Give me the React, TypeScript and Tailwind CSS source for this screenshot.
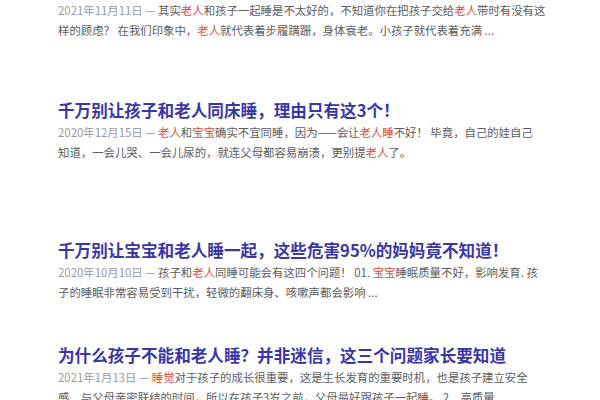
import React from 'react';

type Part = string | { hl: string };

interface ResultProps {
  title?: string;
  date: string;
  lines: Part[][];
  className?: string;
}

const Line: React.FC<{ parts: Part[] }> = ({ parts }) => (
  <>
    {parts.map((p, i) =>
      typeof p === 'string' ? (
        <span key={i}>{p}</span>
      ) : (
        <span key={i} className="text-[#e5473d]">{p.hl}</span>
      )
    )}
  </>
);

const Result: React.FC<ResultProps> = ({ title, date, lines, className }) => (
  <div className={className}>
    {title && (
      <h3 className="text-[16.6px] leading-[24px] font-semibold text-[#3b36a8] whitespace-nowrap">
        {title}
      </h3>
    )}
    <div className="text-[11.4px] leading-[20px] text-[#5c5c5c] whitespace-nowrap">
      {lines.map((parts, i) => (
        <div key={i}>
          {i === 0 && <span className="text-[#9a9a9a]">{date} — </span>}
          <Line parts={parts} />
        </div>
      ))}
    </div>
  </div>
);

export default function App() {
  return (
    <div
      className="w-[600px] h-[400px] overflow-hidden bg-white pl-[58px]"
      style={{ fontFamily: '"Noto Sans CJK SC", "Noto Sans", sans-serif' }}
    >
      <Result
        date="2021年11月11日"
        lines={[
          ['其实', { hl: '老人' }, '和孩子一起睡是不太好的，不知道你在把孩子交给', { hl: '老人' }, '带时有没有这'],
          ['样的顾虑？ 在我们印象中，', { hl: '老人' }, '就代表着步履蹒跚，身体衰老。小孩子就代表着充满 ...'],
        ]}
      />
      <Result
        className="mt-[58px]"
        title="千万别让孩子和老人同床睡，理由只有这3个！"
        date="2020年12月15日"
        lines={[
          [{ hl: '老人' }, '和', { hl: '宝宝' }, '确实不宜同睡，因为——会让', { hl: '老人睡' }, '不好！ 毕竟，自己的娃自己'],
          ['知道，一会儿哭、一会儿尿的，就连父母都容易崩溃，更别提', { hl: '老人' }, '了。'],
        ]}
      />
      <Result
        className="mt-[76px]"
        title="千万别让宝宝和老人睡一起，这些危害95%的妈妈竟不知道！"
        date="2020年10月10日"
        lines={[
          ['孩子和', { hl: '老人' }, '同睡可能会有这四个问题！ 01. ', { hl: '宝宝' }, '睡眠质量不好，影响发育. 孩'],
          ['子的睡眠非常容易受到干扰，轻微的翻床身、咳嗽声都会影响 ...'],
        ]}
      />
      <Result
        className="mt-[41px]"
        title="为什么孩子不能和老人睡？并非迷信，这三个问题家长要知道"
        date="2021年1月13日"
        lines={[
          [{ hl: '睡觉' }, '对于孩子的成长很重要，这是生长发育的重要时机，也是孩子建立安全'],
          ['感、与父母亲密联结的时间，所以在孩子3岁之前，父母最好跟孩子一起睡。 2、高质量 ...'],
        ]}
      />
    </div>
  );
}
